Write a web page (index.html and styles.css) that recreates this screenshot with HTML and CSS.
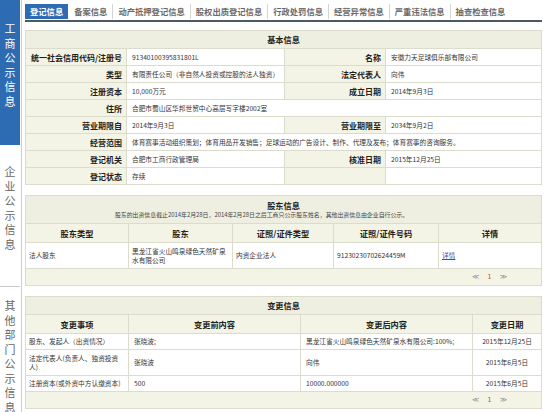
FILE: index.html
```html
<!DOCTYPE html>
<html lang="zh-CN">
<head>
    <meta charset="UTF-8">
    <title>企业信用信息公示</title>
    <link rel="stylesheet" href="styles.css">
</head>
<body>
    <div class="page">
        <!-- left menu -->
        <div class="side">
            <div class="side-item side-item--active"><span>工商公示信息</span></div>
            <div class="side-item side-item--second"><span>企业公示信息</span></div>
            <div class="side-item side-item--third"><span>其他部门公示信息</span></div>
        </div>

        <div class="main">
            <ul class="tabs">
                <li class="tab tab--active">登记信息</li>
                <li class="tab">备案信息</li>
                <li class="tab">动产抵押登记信息</li>
                <li class="tab">股权出质登记信息</li>
                <li class="tab">行政处罚信息</li>
                <li class="tab">经营异常信息</li>
                <li class="tab">严重违法信息</li>
                <li class="tab">抽查检查信息</li>
            </ul>

            <!-- basic info -->
            <table class="grid grid--basic">
                <colgroup>
                    <col style="width: 101px">
                    <col style="width: 158px">
                    <col style="width: 101px">
                    <col style="width: 156px">
                </colgroup>
                <tr><th class="title" colspan="4">基本信息</th></tr>
                <tr>
                    <th class="label">统一社会信用代码/注册号</th><td class="value">91340100395831801L</td>
                    <th class="label">名称</th><td class="value">安徽力天足球俱乐部有限公司</td>
                </tr>
                <tr>
                    <th class="label">类型</th><td class="value">有限责任公司（非自然人投资或控股的法人独资）</td>
                    <th class="label">法定代表人</th><td class="value">向伟</td>
                </tr>
                <tr>
                    <th class="label">注册资本</th><td class="value">10,000万元</td>
                    <th class="label">成立日期</th><td class="value">2014年9月3日</td>
                </tr>
                <tr>
                    <th class="label">住所</th><td class="value" colspan="3">合肥市蜀山区华邦世贸中心高层写字楼2002室</td>
                </tr>
                <tr>
                    <th class="label">营业期限自</th><td class="value">2014年9月3日</td>
                    <th class="label">营业期限至</th><td class="value">2034年9月2日</td>
                </tr>
                <tr>
                    <th class="label">经营范围</th><td class="value" colspan="3">体育赛事活动组织策划；体育用品开发销售；足球运动的广告设计、制作、代理及发布；体育赛事的咨询服务。</td>
                </tr>
                <tr>
                    <th class="label">登记机关</th><td class="value">合肥市工商行政管理局</td>
                    <th class="label">核准日期</th><td class="value">2015年12月25日</td>
                </tr>
                <tr>
                    <th class="label">登记状态</th><td class="value">存续</td>
                    <th class="label"></th><td class="value"></td>
                </tr>
            </table>

            <!-- shareholders -->
            <table class="grid grid--holders">
                <colgroup>
                    <col style="width: 103px">
                    <col style="width: 104px">
                    <col style="width: 101px">
                    <col style="width: 105px">
                    <col style="width: 103px">
                </colgroup>
                <tr>
                    <th class="title title--tall" colspan="5">
                        股东信息
                        <div class="note">股东的出资信息截止2014年2月28日，2014年2月28日之后工商只公示股东姓名，其他出资信息由企业自行公示。</div>
                    </th>
                </tr>
                <tr class="head">
                    <th>股东类型</th><th>股东</th><th>证照/证件类型</th><th>证照/证件号码</th><th>详情</th>
                </tr>
                <tr class="row row--tall">
                    <td>法人股东</td>
                    <td>黑龙江省火山鸣泉绿色天然矿泉水有限公司</td>
                    <td>内资企业法人</td>
                    <td>91230230702624459M</td>
                    <td><a class="link" href="#">详情</a></td>
                </tr>
                <tr>
                    <td class="pager" colspan="5"><span class="pager__arrow">≪</span><span class="pager__num">1</span><span class="pager__arrow">≫</span></td>
                </tr>
            </table>

            <!-- changes -->
            <table class="grid grid--changes">
                <colgroup>
                    <col style="width: 103px">
                    <col style="width: 172px">
                    <col style="width: 172px">
                    <col style="width: 69px">
                </colgroup>
                <tr><th class="title" colspan="4">变更信息</th></tr>
                <tr class="head">
                    <th>变更事项</th><th>变更前内容</th><th>变更后内容</th><th>变更日期</th>
                </tr>
                <tr class="row">
                    <td>股东、发起人（出资情况）</td>
                    <td>张晓波;</td>
                    <td>黑龙江省火山鸣泉绿色天然矿泉水有限公司:100%;</td>
                    <td class="date">2015年12月25日</td>
                </tr>
                <tr class="row row--tall">
                    <td>法定代表人(负责人、独资投资人)</td>
                    <td>张晓波</td>
                    <td>向伟</td>
                    <td class="date">2015年6月5日</td>
                </tr>
                <tr class="row">
                    <td>注册资本(或外资中方认缴资本)</td>
                    <td>500</td>
                    <td>10000.000000</td>
                    <td class="date">2015年6月5日</td>
                </tr>
                <tr>
                    <td class="pager" colspan="4"><span class="pager__arrow">≪</span><span class="pager__num">1</span><span class="pager__arrow">≫</span></td>
                </tr>
            </table>
        </div>
    </div>
</body>
</html>
```

FILE: styles.css
```css
*,
*::before,
*::after {
    box-sizing: border-box;
}

body {
    margin: 0;
    font-family: "Noto Sans CJK SC", "Noto Sans", sans-serif;
    font-size: 6.7px;
    color: #333;
    background: #fff;
}

.page {
    display: flex;
    min-height: 412px;
}

/* side menu */
.side {
    width: 20px;
    flex: none;
    display: flex;
    flex-direction: column;
}

.side-item {
    color: #666;
    font-size: 11px;
    line-height: 14.5px;
    text-align: center;
    border-bottom: 1px solid #c8c8c8;
}

.side-item span {
    display: block;
    width: 11px;
    margin: 0 auto;
}

.side-item--active {
    height: 145px;
    padding-top: 21px;
    color: #fff;
    background: #2d6bb2;
    border-bottom: none;
}

.side-item--second {
    height: 142px;
    padding-top: 19px;
}

.side-item--third {
    flex: 1;
    padding-top: 11px;
    border-bottom: none;
}

/* main column */
.main {
    flex: 1;
    margin-left: 1px;
    padding: 0 9px 0 3px;
    border-left: 1px solid #cfcfcf;
}

/* tabs */
.tabs {
    display: flex;
    margin: 0;
    padding: 4px 0 0;
    list-style: none;
    height: 22px;
    border-bottom: 2px solid #4b5866;
}

.tab {
    height: 15px;
    padding: 0 5px;
    font-size: 8.3px;
    line-height: 15px;
    font-weight: bold;
    color: #6a6a6a;
    border-left: 1px solid #d4d4d4;
}

.tab--active {
    color: #fff;
    background: #2d6bb2;
    border-left: none;
}

.tab--active + .tab {
    border-left: none;
    padding-left: 6px;
}

/* tables */
.grid {
    width: 516px;
    margin: 8px 0 0;
    border-collapse: collapse;
    table-layout: fixed;
}

.grid + .grid {
    margin-top: 10px;
}

.grid th,
.grid td {
    border: 1px solid #dcdccd;
    padding: 0 3px;
    height: 17px;
    line-height: 9px;
    vertical-align: middle;
}

.grid .title {
    height: 18px;
    font-size: 8.2px;
    font-weight: bold;
    color: #222;
    text-align: center;
    background: #efefe1;
}

.grid .title--tall {
    height: 28px;
    line-height: 10px;
}

.note {
    font-size: 5.9px;
    font-weight: normal;
    color: #444;
    padding-right: 44px;
}

.grid .label {
    padding: 0 4px 0 0;
    font-size: 8px;
    font-weight: bold;
    color: #222;
    text-align: right;
    white-space: nowrap;
    background: #f4f4e6;
}

.grid .value {
    padding-left: 5px;
    text-align: left;
}

.grid .head th {
    height: 19px;
    font-size: 8.2px;
    font-weight: bold;
    color: #222;
    text-align: center;
    background: #f4f4e6;
}

.grid .row td {
    height: 16px;
}

.grid .row--tall td {
    height: 26px;
}

.grid--changes .row td:nth-child(2),
.grid--changes .row td:nth-child(3) {
    padding-left: 5px;
}

.grid .date {
    text-align: center;
}

.link {
    color: #3a4fa8;
    text-decoration: underline;
}

.grid .pager {
    height: 17px;
    padding-right: 34px;
    text-align: right;
    font-family: "DejaVu Sans", sans-serif;
    font-size: 7px;
    color: #8a8a8a;
    background: #f4f4e6;
}

.pager__num {
    margin: 0 8px;
    color: #b5604a;
}
```
